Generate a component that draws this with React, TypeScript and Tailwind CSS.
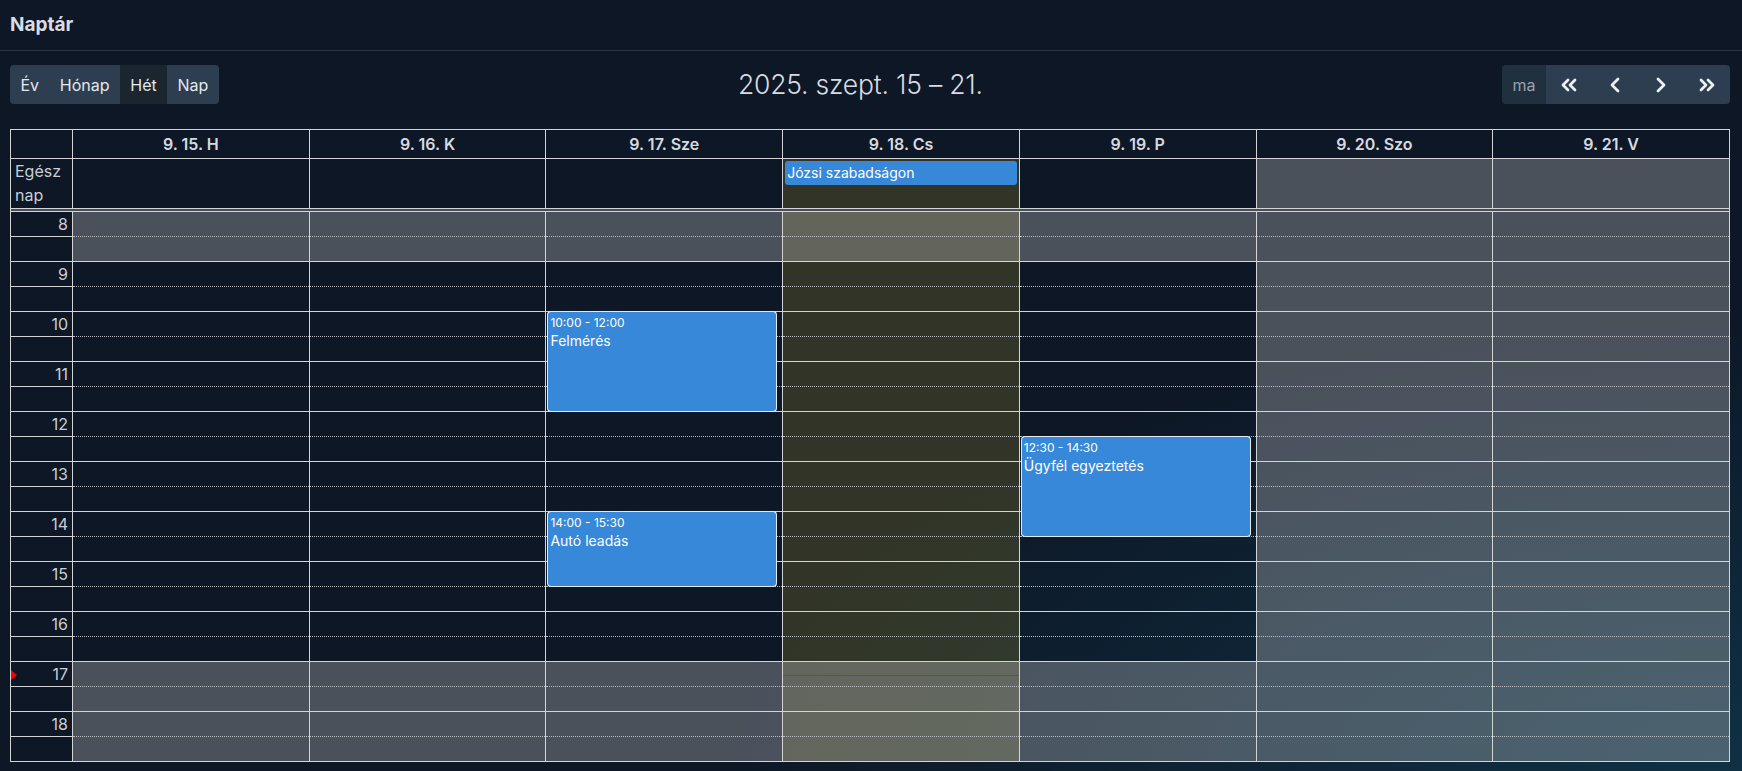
import { ChevronLeft, ChevronRight, ChevronsLeft, ChevronsRight } from "lucide-react";

type Day = { label: string; weekend: boolean };
type CalEvent = { day: number; start: number; end: number; time: string; title: string };

const days: Day[] = [
  { label: "9. 15. H", weekend: false },
  { label: "9. 16. K", weekend: false },
  { label: "9. 17. Sze", weekend: false },
  { label: "9. 18. Cs", weekend: false },
  { label: "9. 19. P", weekend: false },
  { label: "9. 20. Szo", weekend: true },
  { label: "9. 21. V", weekend: true },
];

const TODAY = 3;
const FIRST_HOUR = 8;
const HOUR_PX = 50;
const NOW = 17 + 17 / 60;
const hours = [8, 9, 10, 11, 12, 13, 14, 15, 16, 17, 18];

const events: CalEvent[] = [
  { day: 2, start: 10, end: 12, time: "10:00 - 12:00", title: "Felmérés" },
  { day: 2, start: 14, end: 15.5, time: "14:00 - 15:30", title: "Autó leadás" },
  { day: 4, start: 12.5, end: 14.5, time: "12:30 - 14:30", title: "Ügyfél egyeztetés" },
];

const cols = "grid grid-cols-[61px_repeat(7,minmax(0,1fr))]";

const isBusiness = (day: Day, hour: number) => !day.weekend && hour >= 9 && hour < 17;

const Toolbar = () => (
  <div className="flex items-center justify-between mt-[14px] ml-[10px] mr-[12px] h-[39px]">
    <div className="flex rounded-[4px] overflow-hidden text-[16px] text-[#e5e7eb]">
      <button className="h-[39px] px-[10.4px] bg-[#2c3e50]">Év</button>
      <button className="h-[39px] px-[10.4px] bg-[#2c3e50]">Hónap</button>
      <button className="h-[39px] px-[10.4px] bg-[#1a252f]">Hét</button>
      <button className="h-[39px] px-[10.4px] bg-[#2c3e50]">Nap</button>
    </div>

    <h2 className="text-[26.5px] font-light text-[#d8dce2] tracking-[-0.2px]">2025. szept. 15 – 21.</h2>

    <div className="flex rounded-[4px] overflow-hidden text-[#eef1f4]">
      <button className="h-[39px] w-[44px] bg-[#21303f] text-[16px] text-[#9aa3ad]">ma</button>
      <button className="h-[39px] w-[46px] bg-[#2c3e50] flex items-center justify-center">
        <ChevronsLeft size={24} strokeWidth={2.75} />
      </button>
      <button className="h-[39px] w-[46px] bg-[#2c3e50] flex items-center justify-center">
        <ChevronLeft size={24} strokeWidth={2.75} />
      </button>
      <button className="h-[39px] w-[46px] bg-[#2c3e50] flex items-center justify-center">
        <ChevronRight size={24} strokeWidth={2.75} />
      </button>
      <button className="h-[39px] w-[46px] bg-[#2c3e50] flex items-center justify-center">
        <ChevronsRight size={24} strokeWidth={2.75} />
      </button>
    </div>
  </div>
);

const DayColumn = ({ day, index }: { day: Day; index: number }) => {
  const today = index === TODAY;
  return (
    <div className={`relative border-l border-[#d2d4d6] ${today ? "bg-[rgba(255,220,40,0.15)]" : ""}`}>
      {hours.map((h) => (
        <div key={h} className={isBusiness(day, h) ? "" : "bg-[rgba(215,215,215,0.3)]"}>
          <div className="h-[25px] border-t border-[#d2d4d6]" />
          <div className="h-[25px] border-t border-dotted border-[#b9bcc0]" />
        </div>
      ))}

      {events
        .filter((e) => e.day === index)
        .map((e) => (
          <div
            key={e.title}
            className="absolute left-[2px] right-[2.5%] rounded-[3px] bg-[#3788d8] border border-[#3788d8] shadow-[0_0_0_1px_#e6eaee] px-[1px] text-white overflow-hidden"
            style={{ top: (e.start - FIRST_HOUR) * HOUR_PX + 1, height: (e.end - e.start) * HOUR_PX - 1 }}
          >
            <div className="text-[12px] leading-[18px] mt-[1px]">{e.time}</div>
            <div className="text-[14px] leading-[18px]">{e.title}</div>
          </div>
        ))}

      {today && (
        <div
          className="absolute left-0 right-0 border-t border-[#e01b1b]"
          style={{ top: (NOW - FIRST_HOUR) * HOUR_PX }}
        />
      )}
    </div>
  );
};

export default function App() {
  return (
    <div className="min-h-screen bg-[#0d1726] bg-[radial-gradient(ellipse_at_100%_100%,#0f3144_0%,#0d1726_42%)] font-['Inter','Noto_Sans',sans-serif] text-[#d1d5db] pb-[10px]">
      {/* Header */}
      <div className="h-[51px] border-b border-[#2a3544] px-[10px] flex items-center">
        <h1 className="text-[19px] font-bold text-[#d9dde3]">Naptár</h1>
      </div>

      <Toolbar />

      {/* Week grid */}
      <div className="mt-[25px] ml-[10px] mr-[12px] border border-[#d2d4d6]">
        <div className={cols}>
          <div className="h-[28px]" />
          {days.map((d) => (
            <div key={d.label} className="h-[28px] border-l border-[#d2d4d6] text-center text-[16px] font-semibold leading-[28px] text-[#d6dae0]">
              {d.label}
            </div>
          ))}
        </div>

        {/* All-day row */}
        <div className={`${cols} border-t border-[#d2d4d6]`}>
          <div className="h-[49px] pl-[4px] text-[16px] leading-[24px] text-[#c9ced5]">
            Egész
            <br />
            nap
          </div>
          {days.map((d, i) => (
            <div
              key={d.label}
              className={`h-[49px] border-l border-[#d2d4d6] ${
                d.weekend ? "bg-[rgba(215,215,215,0.3)]" : i === TODAY ? "bg-[rgba(255,220,40,0.15)]" : ""
              }`}
            >
              {i === TODAY && (
                <div className="mt-[2px] mx-[2px] h-[24px] rounded-[3px] bg-[#3788d8] px-[2px] text-[14px] leading-[24px] text-white">
                  Józsi szabadságon
                </div>
              )}
            </div>
          ))}
        </div>

        <div className="h-[3px] border-t border-[#d2d4d6] bg-[rgba(208,208,208,0.3)]" />

        {/* Time slots */}
        <div className={cols}>
          <div className="relative">
            {hours.map((h) => (
              <div key={h}>
                <div className="h-[25px] border-t border-[#d2d4d6] pr-[4px] text-right text-[16px] leading-[24px] text-[#c9ced5]">
                  {h}
                </div>
                <div className="h-[25px] border-t border-[#d2d4d6]" />
              </div>
            ))}
            <div
              className="absolute left-0 border-y-[5px] border-y-transparent border-l-[6px] border-l-[#ff0000]"
              style={{ top: (NOW - FIRST_HOUR) * HOUR_PX - 5 }}
            />
          </div>
          {days.map((d, i) => (
            <DayColumn key={d.label} day={d} index={i} />
          ))}
        </div>
      </div>
    </div>
  );
}
